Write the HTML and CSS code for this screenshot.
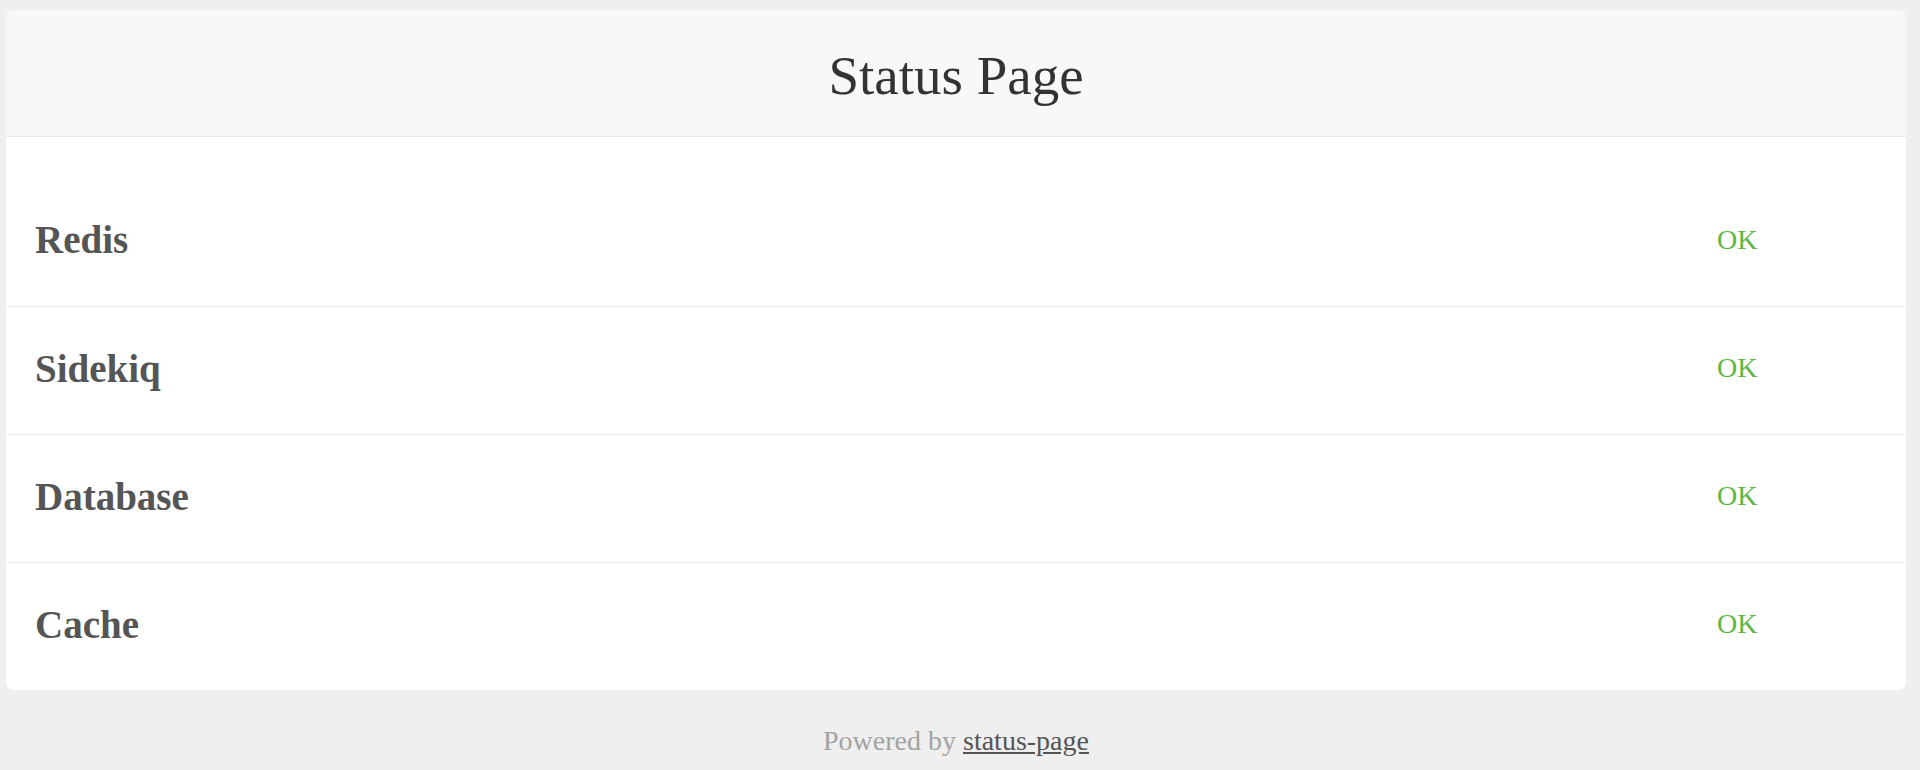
FILE: index.html
```html
<!DOCTYPE html>
<html lang="en">
<head>
    <meta charset="UTF-8">
    <meta name="viewport" content="width=device-width, initial-scale=1.0">
    <title>Status Page</title>
    <link rel="stylesheet" href="styles.css">
</head>
<body>
    <div class="container">
        <div class="panel">
            <header class="panel-header">
                <h1>Status Page</h1>
            </header>

            <ul class="checks">
                <li class="check">
                    <span class="check-name">Redis</span>
                    <span class="check-status ok">OK</span>
                </li>
                <li class="check">
                    <span class="check-name">Sidekiq</span>
                    <span class="check-status ok">OK</span>
                </li>
                <li class="check">
                    <span class="check-name">Database</span>
                    <span class="check-status ok">OK</span>
                </li>
                <li class="check">
                    <span class="check-name">Cache</span>
                    <span class="check-status ok">OK</span>
                </li>
            </ul>
        </div>

        <footer class="powered">
            <p>Powered by <a href="#">status-page</a></p>
        </footer>
    </div>
</body>
</html>
```

FILE: styles.css
```css
*, :after, :before {
    margin: 0;
    padding: 0;
    box-sizing: border-box;
}

body {
    background: #efefef;
    font-family: 'Liberation Serif', 'Times New Roman', serif;
    padding: 10px 14px 0 6px;
}

.panel {
    background: #fff;
    border-radius: 8px;
    overflow: hidden;
}

.panel-header {
    background: #f8f8f8;
    height: 127px;
    border-bottom: 1px solid #e8e8e8;
    padding-top: 35px;
    text-align: center;
}

.panel-header h1 {
    font-size: 55px;
    font-weight: normal;
    color: #333;
    line-height: 61px;
}

.checks {
    list-style: none;
    padding-top: 42px;
}

.check {
    display: grid;
    grid-template-columns: 1fr 160px;
    align-items: center;
    height: 128px;
    padding: 0 29px 5px 29px;
    border-bottom: 1px solid #e8e8e8;
}

.check:last-child {
    border-bottom: none;
    height: 127px;
}

.check:first-child {
    padding-bottom: 6px;
}

.check-name {
    font-size: 39px;
    font-weight: bold;
    color: #555;
}

.check-status {
    font-size: 28px;
}

.check-status.ok {
    color: #5cb845;
}

.powered {
    text-align: center;
    margin-top: 35px;
}

.powered p {
    font-size: 28px;
    color: #a3a3a3;
    line-height: 32px;
}

.powered a {
    color: #555;
}
```
